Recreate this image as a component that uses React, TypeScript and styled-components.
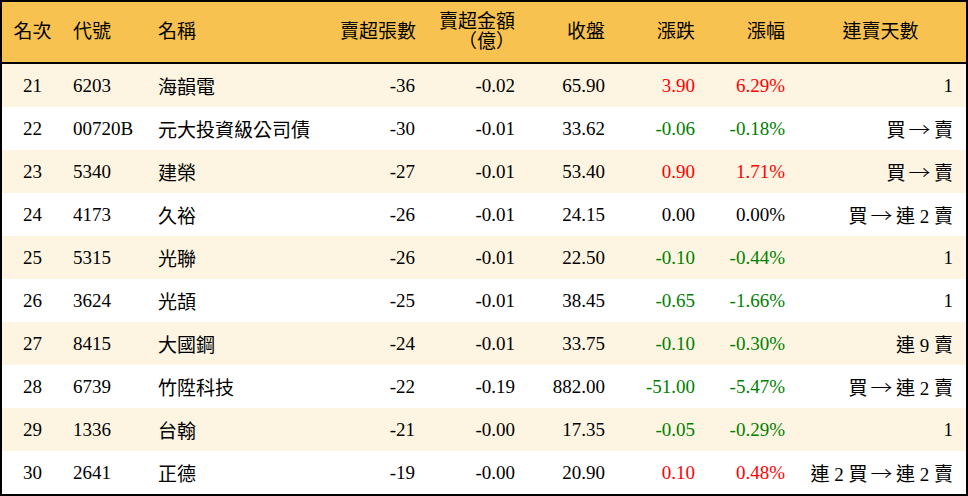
import React from "react";
import styled, { createGlobalStyle } from "styled-components";

const GlobalStyle = createGlobalStyle`
  html, body { margin: 0; padding: 0; background: #ffffff; }
  body { font-family: "Liberation Serif", "Noto Sans CJK TC", serif; }
`;

const COLS = "61px 85px 182px 95px 100px 90px 90px 90px 171px";

const Table = styled.div`
  width: 968px;
  box-sizing: border-box;
  border: 2px solid #000;
  font-family: "Liberation Serif", "Noto Sans CJK TC", serif;
  font-size: 19px;
  color: #000;
`;

const HeaderRow = styled.div`
  display: grid;
  grid-template-columns: ${COLS};
  height: 60px;
  background: #f8c250;
  border-bottom: 2px solid #000;
`;

type Align = "left" | "right" | "center";

const HeadCell = styled.div<{ $align: Align; $pr?: number }>`
  display: flex;
  align-items: center;
  justify-content: ${(p) =>
    p.$align === "left" ? "flex-start" : p.$align === "right" ? "flex-end" : "center"};
  text-align: ${(p) => p.$align};
  padding: 0 ${(p) => (p.$pr ?? 10)}px 0 10px;
  line-height: 20px;
  white-space: pre;
  min-width: 0;
`;

const Row = styled.div<{ $alt: boolean }>`
  display: grid;
  grid-template-columns: ${COLS};
  height: 43px;
  background: ${(p) => (p.$alt ? "#fdf5e2" : "#ffffff")};
`;

const Cell = styled.div<{ $align: Align; $color?: string; $pr?: number }>`
  display: flex;
  align-items: center;
  justify-content: ${(p) =>
    p.$align === "left" ? "flex-start" : p.$align === "right" ? "flex-end" : "center"};
  padding: 0 ${(p) => (p.$pr ?? 10)}px 0 10px;
  color: ${(p) => p.$color ?? "#000"};
  white-space: pre;
  min-width: 0;
`;

const Arrow = styled.span`
  font-family: "Noto Sans CJK TC", sans-serif;
  font-weight: 300;
  display: inline-block;
  transform: scaleX(1.15);
`;

const RED = "#ff0000";
const GREEN = "#008000";

type R = {
  rank: string;
  code: string;
  name: string;
  vol: string;
  amt: string;
  close: string;
  chg: string;
  pct: string;
  days: string;
};

const rows: R[] = [
  { rank: "21", code: "6203", name: "海韻電", vol: "-36", amt: "-0.02", close: "65.90", chg: "3.90", pct: "6.29%", days: "1" },
  { rank: "22", code: "00720B", name: "元大投資級公司債", vol: "-30", amt: "-0.01", close: "33.62", chg: "-0.06", pct: "-0.18%", days: "買 → 賣" },
  { rank: "23", code: "5340", name: "建榮", vol: "-27", amt: "-0.01", close: "53.40", chg: "0.90", pct: "1.71%", days: "買 → 賣" },
  { rank: "24", code: "4173", name: "久裕", vol: "-26", amt: "-0.01", close: "24.15", chg: "0.00", pct: "0.00%", days: "買 → 連 2 賣" },
  { rank: "25", code: "5315", name: "光聯", vol: "-26", amt: "-0.01", close: "22.50", chg: "-0.10", pct: "-0.44%", days: "1" },
  { rank: "26", code: "3624", name: "光頡", vol: "-25", amt: "-0.01", close: "38.45", chg: "-0.65", pct: "-1.66%", days: "1" },
  { rank: "27", code: "8415", name: "大國鋼", vol: "-24", amt: "-0.01", close: "33.75", chg: "-0.10", pct: "-0.30%", days: "連 9 賣" },
  { rank: "28", code: "6739", name: "竹陞科技", vol: "-22", amt: "-0.19", close: "882.00", chg: "-51.00", pct: "-5.47%", days: "買 → 連 2 賣" },
  { rank: "29", code: "1336", name: "台翰", vol: "-21", amt: "-0.00", close: "17.35", chg: "-0.05", pct: "-0.29%", days: "1" },
  { rank: "30", code: "2641", name: "正德", vol: "-19", amt: "-0.00", close: "20.90", chg: "0.10", pct: "0.48%", days: "連 2 買 → 連 2 賣" },
];

const colorOf = (v: string) => {
  const n = parseFloat(v);
  if (n > 0) return RED;
  if (n < 0) return GREEN;
  return "#000";
};

const renderDays = (s: string) => {
  const parts = s.split("→");
  if (parts.length === 1) return s;
  return (
    <>
      {parts[0]}
      <Arrow>→</Arrow>
      {parts[1]}
    </>
  );
};

export default function App() {
  return (
    <>
      <GlobalStyle />
      <Table>
        <HeaderRow>
          <HeadCell $align="center">名次</HeadCell>
          <HeadCell $align="left">代號</HeadCell>
          <HeadCell $align="left">名稱</HeadCell>
          <HeadCell $align="right" $pr={9}>賣超張數</HeadCell>
          <HeadCell $align="right">{"賣超金額\n（億）"}</HeadCell>
          <HeadCell $align="right">收盤</HeadCell>
          <HeadCell $align="right">漲跌</HeadCell>
          <HeadCell $align="right">漲幅</HeadCell>
          <HeadCell $align="center">連賣天數</HeadCell>
        </HeaderRow>
        {rows.map((r, i) => (
          <Row key={r.rank} $alt={i % 2 === 0}>
            <Cell $align="center">{r.rank}</Cell>
            <Cell $align="left">{r.code}</Cell>
            <Cell $align="left">{r.name}</Cell>
            <Cell $align="right">{r.vol}</Cell>
            <Cell $align="right">{r.amt}</Cell>
            <Cell $align="right">{r.close}</Cell>
            <Cell $align="right" $color={colorOf(r.chg)}>{r.chg}</Cell>
            <Cell $align="right" $color={colorOf(r.pct)}>{r.pct}</Cell>
            <Cell $align="right" $pr={13}>{renderDays(r.days)}</Cell>
          </Row>
        ))}
      </Table>
    </>
  );
}
